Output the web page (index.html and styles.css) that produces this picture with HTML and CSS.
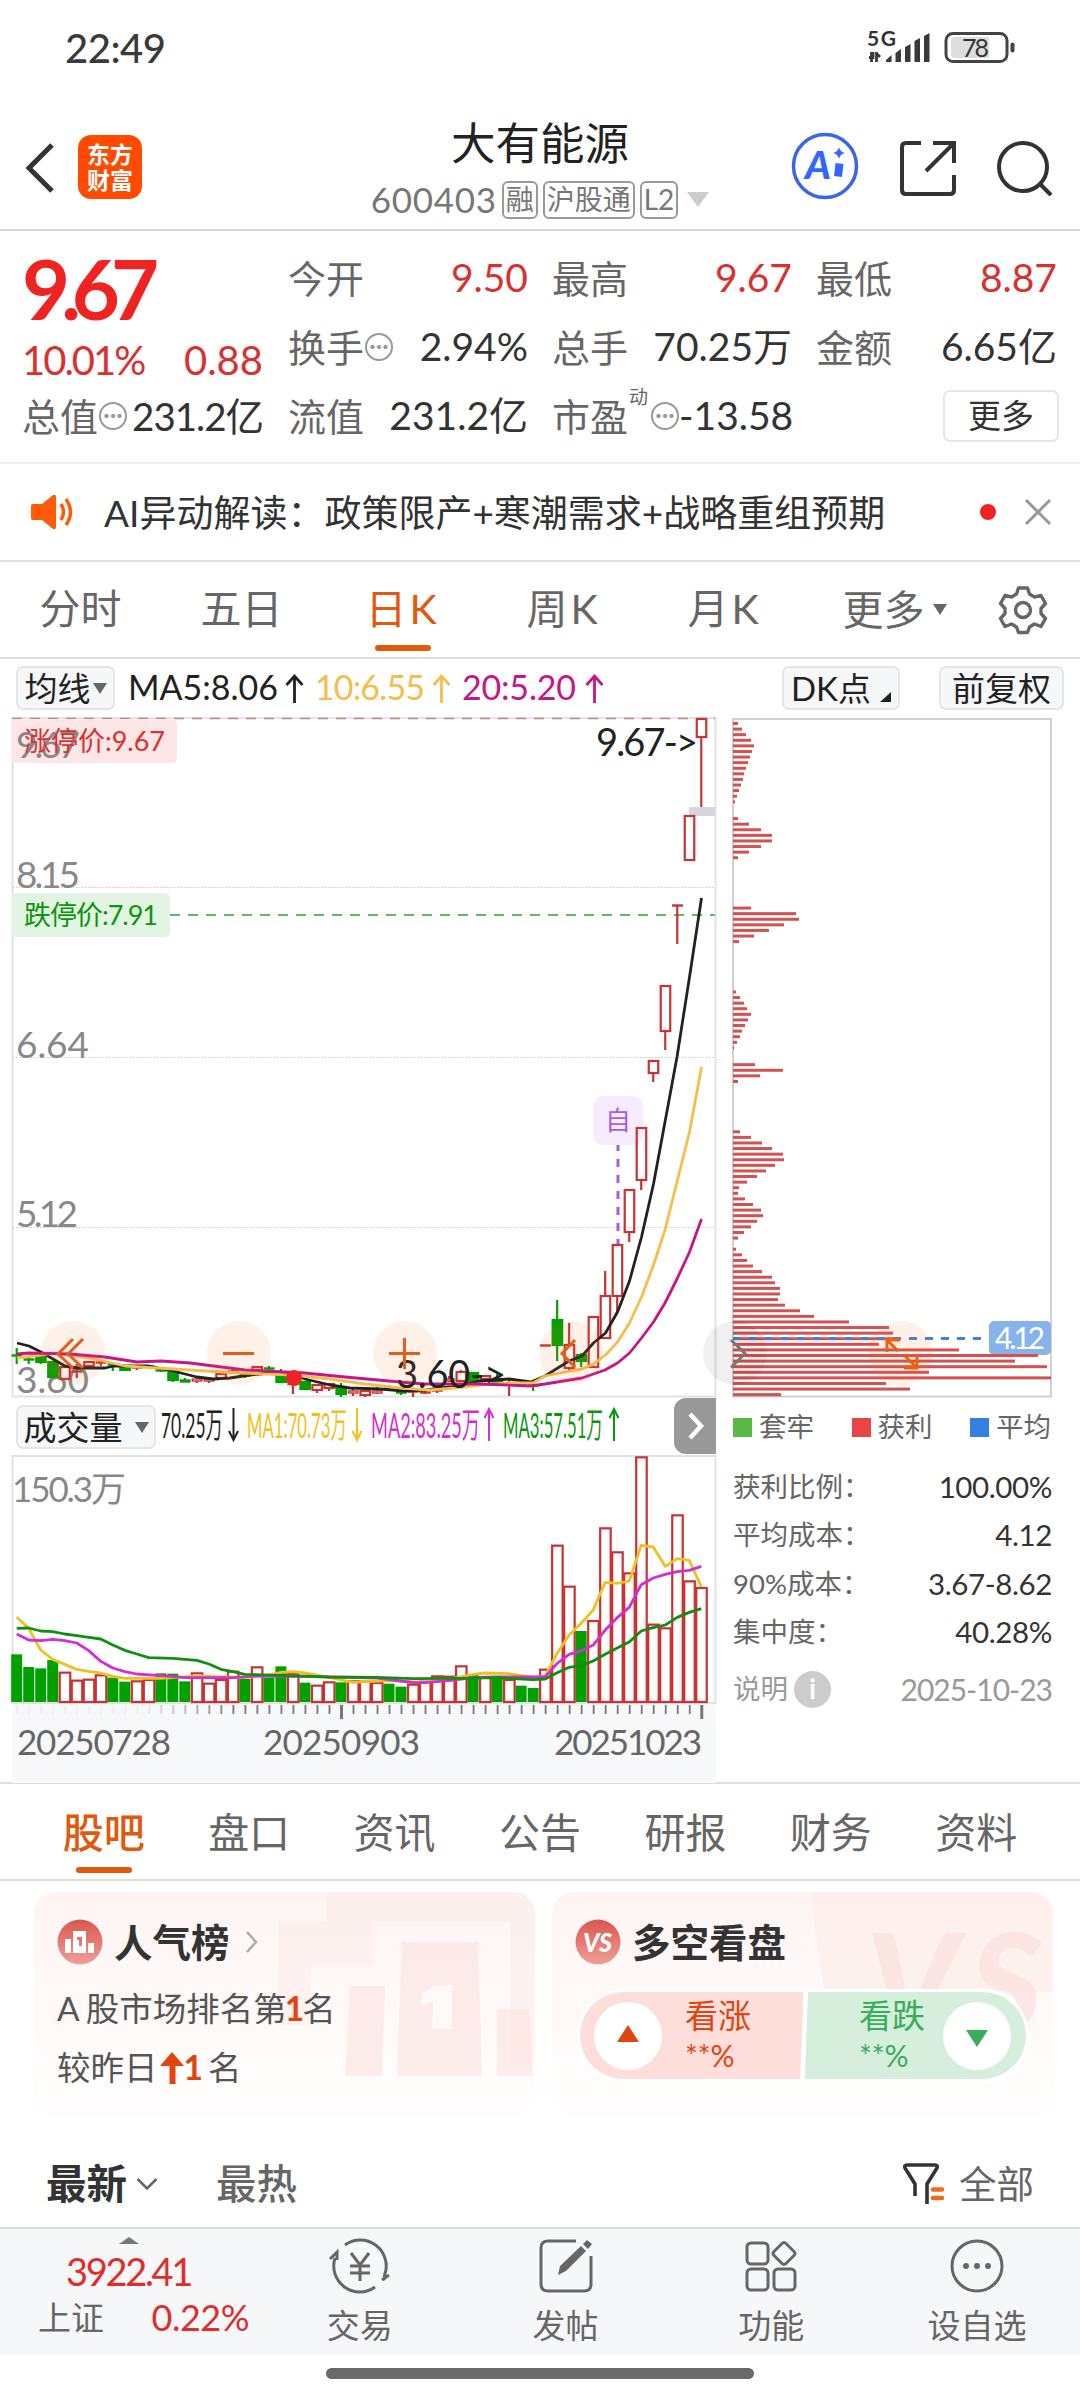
FILE: index.html
```html
<!DOCTYPE html>
<html lang="zh-CN">
<head>
    <meta charset="UTF-8">
    <meta name="viewport" content="width=device-width, initial-scale=1.0">
    <title>大有能源 600403</title>
    <link rel="stylesheet" href="styles.css">
</head>
<body>
    <div class="status-bar">
        <span class="time">22:49</span>
        <svg class="status-icons" width="150" height="44" viewBox="866 26 150 44">
            <text x="867" y="45.500" class="net" textLength="29">5G</text>
            <path d="M869 57.500h4V52M871.500 62V52M876.500 62V52M876 53l4 4" fill="none" stroke="#3a3a3a" stroke-width="2.800"/>
            <path d="M886 60l5.500-5v7H886zM895.500 53l5.500-4v13h-5.500zM905 47l5.500-3v18H905zM914.500 41l5.500-3v24h-5.500zM924 36l5.500-3v29H924z" fill="#3a3a3a"/>
            <rect x="946" y="33.500" width="61" height="28" rx="7" fill="#fff" stroke="#444" stroke-width="3"/>
            <path d="M955 37h34v21h-34q-4 0-4-4V41q0-4 4-4z" fill="#ddd"/>
            <path d="M1012.500 44.500v6" stroke="#444" stroke-width="4" stroke-linecap="round"/>
            <text x="962" y="57" class="batt" textLength="27">78</text>
        </svg>
    </div>

    <div class="header">
        <div class="header-left">
            <svg width="32" height="54" viewBox="0 0 32 54"><path d="M28 4L5 27l23 23" fill="none" stroke="#333" stroke-width="5"/></svg>
            <div class="logo"><span>东方</span><span>财富</span></div>
        </div>
        <div class="header-title">
            <h1>大有能源</h1>
            <div class="code">
                <span class="num">600403</span>
                <span class="tag">融</span>
                <span class="tag">沪股通</span>
                <span class="tag">L2</span>
                <i class="down"></i>
            </div>
        </div>
        <div class="header-right">
            <svg width="68" height="68" viewBox="0 0 68 68">
                <circle cx="34" cy="34" r="31.500" fill="none" stroke="#3a66e6" stroke-width="3.500"/>
                <text x="14" y="47" class="ai" textLength="26" lengthAdjust="spacingAndGlyphs">A</text>
                <path d="M48.500 31.500L47 44.500" stroke="#3366ff" stroke-width="8"/>
                <path d="M48 15q1 5 6 6-5 1-6 6-1-5-6-6 5-1 6-6z" fill="#3366ff"/>
            </svg>
            <svg width="56" height="56" viewBox="0 0 56 56"><path d="M21 3H6q-4 0-4 4v43q0 4 4 4h44q4 0 4-4V35M33 3h21v20M53 4L26 31" fill="none" stroke="#333" stroke-width="4"/></svg>
            <svg width="56" height="58" viewBox="0 0 56 58"><circle cx="26" cy="27" r="24" fill="none" stroke="#333" stroke-width="4"/><path d="M42 43l12 12" stroke="#333" stroke-width="4"/></svg>
        </div>
    </div>

    <div class="quote">
        <div class="main-price">
            <div class="price">9.67</div>
            <div class="change"><span class="percent">10.01%</span><span>0.88</span></div>
            <div class="cell"><label>总值</label><i class="dots"></i><b>231.2亿</b></div>
        </div>
        <div class="quote-col col-2">
            <div class="cell"><label>今开</label><b class="red">9.50</b></div>
            <div class="cell"><label>换手</label><i class="dots"></i><b>2.94%</b></div>
            <div class="cell"><label>流值</label><b>231.2亿</b></div>
        </div>
        <div class="quote-col col-3">
            <div class="cell"><label>最高</label><b class="red">9.67</b></div>
            <div class="cell"><label>总手</label><b>70.25万</b></div>
            <div class="cell"><label>市盈</label><sup>动</sup><i class="dots"></i><b>-13.58</b></div>
        </div>
        <div class="quote-col col-4">
            <div class="cell"><label>最低</label><b class="red">8.87</b></div>
            <div class="cell"><label>金额</label><b>6.65亿</b></div>
            <div class="cell end"><button class="more">更多</button></div>
        </div>
    </div>

    <div class="notice">
        <svg width="44" height="38" viewBox="0 0 44 38">
            <path d="M2 11h9L22 2q3-1 3 2v30q0 3-3 2l-11-9H2q-2 0-2-2V13q0-2 2-2z" fill="#ff5a0a"/>
            <path d="M30 11q5 8 0 16M35 6q9 13 0 26" fill="none" stroke="#ff5a0a" stroke-width="3.500"/>
        </svg>
        <span class="notice-text">AI异动解读：政策限产+寒潮需求+战略重组预期</span>
        <i class="dot"></i>
        <svg class="close" width="28" height="28" viewBox="0 0 28 28"><path d="M2 2l24 24M26 2L2 26" stroke="#999" stroke-width="3"/></svg>
    </div>

    <div class="period-tabs">
        <span>分时</span>
        <span>五日</span>
        <span class="active k">日K</span>
        <span class="k">周K</span>
        <span class="k">月K</span>
        <span class="wide">更多<i class="tri"></i></span>
        <svg width="50" height="50" viewBox="-25 -25 50 50">
            <path d="M-4.500-22h9l2 6 5 3 6.500-1.500 4.500 8-4.500 5v5l4.500 5-4.500 8L11.500 14l-5 3-2 5.500h-9l-2-5.500-5-3-6.500 2.500-4.500-8 4.500-5v-5l-4.500-5 4.500-8 6.500 1.500 5-3z" fill="none" stroke="#666" stroke-width="3.400" stroke-linejoin="round"/>
            <circle r="7.500" fill="none" stroke="#666" stroke-width="3.400"/>
        </svg>
    </div>

    <div class="ma-bar">
        <button class="pill ma-pill">均线<i class="tri"></i></button>
        <svg width="484" height="44" viewBox="126 667 484 44">
            <g class="ma-text">
                <text x="128" y="701" textLength="150" fill="#222">MA5:8.06</text>
                <text x="315" y="701" textLength="110" fill="#f5bd4b">10:6.55</text>
                <text x="462" y="701" textLength="114" fill="#c71585">20:5.20</text>
            </g>
            <g fill="none" stroke-width="2.800">
                <path d="M294.500 704v-27M286.500 686l8-9 8 9" stroke="#222"/>
                <path d="M441.500 704v-27M433.500 686l8-9 8 9" stroke="#f5bd4b"/>
                <path d="M594.500 704v-27M586.500 686l8-9 8 9" stroke="#c71585"/>
            </g>
        </svg>
        <button class="pill dk-pill">DK点<i class="corner"></i></button>
        <button class="pill fq-pill">前复权</button>
    </div>

    <div class="charts">
        <div class="chart-left">
            <svg id="kline" width="720" height="688" viewBox="0 710 720 688"></svg>
            <div class="vol-bar">
                <button class="pill vol-pill">成交量<i class="tri"></i></button>
                <svg width="514" height="54" viewBox="160 1400 514 54">
                    <g class="vol-text">
                        <text x="161" y="1440" textLength="62" lengthAdjust="spacingAndGlyphs" fill="#222">70.25万</text>
                        <text x="247" y="1440" textLength="100" lengthAdjust="spacingAndGlyphs" fill="#f0c020">MA1:70.73万</text>
                        <text x="371" y="1440" textLength="109" lengthAdjust="spacingAndGlyphs" fill="#d22fd2">MA2:83.25万</text>
                        <text x="503" y="1440" textLength="100" lengthAdjust="spacingAndGlyphs" fill="#0a960a">MA3:57.51万</text>
                    </g>
                    <g fill="none" stroke-width="2">
                        <path d="M233.500 1410v32M229 1433l4.500 9 4.500-9" stroke="#222"/>
                        <path d="M357 1410v32M352.500 1433l4.500 9 4.500-9" stroke="#f0c020"/>
                        <path d="M489 1443v-32M484.500 1420l4.500-9 4.500 9" stroke="#d22fd2"/>
                        <path d="M614 1443v-32M609.500 1420l4.500-9 4.500 9" stroke="#0a960a"/>
                    </g>
                </svg>
                <button class="next"><svg width="20" height="28" viewBox="0 0 20 28"><path d="M4 2l11 12L4 26" fill="none" stroke="#fff" stroke-width="4.500"/></svg></button>
            </div>
            <svg id="volume" width="720" height="329" viewBox="0 1454 720 329"></svg>
        </div>
        <div class="chart-right">
            <svg id="chips" width="360" height="688" viewBox="720 710 360 688"></svg>
            <div class="legend">
                <span><i class="sq green"></i>套牢</span>
                <span><i class="sq red"></i>获利</span>
                <span><i class="sq blue"></i>平均</span>
            </div>
            <div class="stat"><span>获利比例：</span><b>100.00%</b></div>
            <div class="stat"><span>平均成本：</span><b>4.12</b></div>
            <div class="stat"><span>90%成本：</span><b>3.67-8.62</b></div>
            <div class="stat"><span>集中度：</span><b>40.28%</b></div>
            <div class="stat-date"><span>说明<i class="info">i</i></span><b>2025-10-23</b></div>
        </div>

        <!-- 图表操作按钮 -->
        <svg class="tools" width="1080" height="70" viewBox="0 1318 1080 70">
            <g fill="#ff6a1a" fill-opacity="0.1">
                <circle cx="73" cy="1353" r="32"/>
                <circle cx="239" cy="1353" r="32"/>
                <circle cx="405" cy="1353" r="32"/>
                <circle cx="571" cy="1353" r="32"/>
                <circle cx="901" cy="1353" r="32"/>
            </g>
            <circle cx="735" cy="1353" r="32" fill="#000" fill-opacity="0.06"/>
            <g fill="none" stroke="#e0601a" stroke-width="3">
                <path d="M73 1339l-15 15 15 14M83 1339l-15 15 15 14"/>
                <path d="M223 1353.500h31M389 1353.500h31M404.500 1338v31"/>
                <path d="M575 1340l-13 13.500 13 14"/>
                <path d="M887 1352v-12h13M887 1340l11 11M905 1356l12 12M904 1368h13v-12" stroke="#f0600a"/>
            </g>
            <path d="M731 1340l14 13.500-14 14" fill="none" stroke="#777" stroke-width="3"/>
        </svg>
    </div>

    <div class="info-tabs">
        <span class="active">股吧</span>
        <span>盘口</span>
        <span>资讯</span>
        <span>公告</span>
        <span>研报</span>
        <span>财务</span>
        <span>资料</span>
    </div>

    <div class="cards">
        <div class="card">
            <svg class="deco" width="501" height="225" viewBox="34 1892 501 225">
                <g fill="#fbe9e6" fill-opacity="0.4">
                    <path d="M326 1892h209v170h-25V1922H373v44h-62v60h-33v-105h48z"/>
                </g>
                <g fill="#fae3e0" fill-opacity="0.65">
                    <path d="M350 1986h35l-3 90h-37zM497 2009h32l4 67h-36z"/>
                    <path fill-rule="evenodd" d="M402 1942h76l4 134h-85zM436 1985l-14 8-1 13 12-4-1 27h20v-44z"/>
                </g>
            </svg>
            <div class="card-head">
                <svg width="46" height="46" viewBox="0 0 46 46">
                    <circle cx="23" cy="23" r="22.500" fill="url(#badge)"/>
                    <path d="M8 20h6v14H8zM31 24h6v10h-6z" fill="#fff"/>
                    <path fill-rule="evenodd" d="M16 12h13v22H16zM20 18v3h2v6h3V18z" fill="#fff"/>
                    <defs><linearGradient id="badge" x2="0" y2="1"><stop stop-color="#db5650"/><stop offset="1" stop-color="#ef9e98"/></linearGradient></defs>
                </svg>
                <h2>人气榜</h2>
                <svg width="14" height="22" viewBox="0 0 14 22"><path d="M2 1l9 10-9 10" fill="none" stroke="#aaa" stroke-width="2.500"/></svg>
            </div>
            <p class="rank">A<span class="sp"></span>股市场排名第<em>1</em>名</p>
            <p class="rank second">较昨日<svg width="24" height="32" viewBox="0 0 24 32"><path d="M12 0l12 14h-8.500v18h-6V14H0z" fill="#e2440f"/></svg><em>1</em><span class="sp"></span>名</p>
        </div>
        <div class="card">
            <svg class="deco" width="502" height="225" viewBox="552 1892 502 225">
                <path d="M810 1892h224q20 0 20 20v80H824z" fill="#fbe9e6" fill-opacity="0.5"/>
                <text x="866" y="2034" class="deco-vs" textLength="176">VS</text>
            </svg>
            <div class="card-head">
                <svg width="46" height="46" viewBox="0 0 46 46">
                    <circle cx="23" cy="23" r="22.500" fill="url(#badge)"/>
                    <text x="8" y="33" class="vs" textLength="29" lengthAdjust="spacingAndGlyphs">VS</text>
                </svg>
                <h2>多空看盘</h2>
            </div>
            <div class="vote">
                <div class="vote-up">
                    <span class="knob"><i></i></span>
                    <div><strong>看涨</strong><small>**%</small></div>
                </div>
                <div class="vote-down">
                    <div><strong>看跌</strong><small>**%</small></div>
                    <span class="knob"><i></i></span>
                </div>
            </div>
        </div>
    </div>

    <div class="sort-bar">
        <strong>最新</strong>
        <svg width="22" height="14" viewBox="0 0 22 14"><path d="M1.500 2L11 11.500 20.500 2" fill="none" stroke="#666" stroke-width="2.500"/></svg>
        <span class="hot">最热</span>
        <svg class="filter" width="42" height="44" viewBox="0 0 42 44">
            <path d="M12 34V22L2 6q-1-3 2-3h28q3 0 2 3L24 22v20" fill="none" stroke="#333" stroke-width="3.600"/>
            <path d="M30 27.500h9M30 36h9" stroke="#f0681a" stroke-width="4.500" stroke-linecap="round"/>
        </svg>
        <span class="all">全部</span>
    </div>

    <div class="bottom-nav">
        <div class="index">
            <i class="up"></i>
            <div class="index-value">3922.41</div>
            <div class="index-row"><span>上证</span><b>0.22%</b></div>
        </div>
        <div class="nav-item">
            <svg width="62" height="58" viewBox="-31 -29 62 58">
                <g fill="none" stroke="#666" stroke-width="3">
                    <path d="M-15-21A26 26 0 0 1 25 8M22 14l7-5M24 14l1-7M15 21A26 26 0 0 1-25-8M-30-7l7-7v8"/>
                    <path d="M-9-13L0-1l9-12M-10 0h20M-10 7h20M0-1v16"/>
                </g>
            </svg>
            <span>交易</span>
        </div>
        <div class="nav-item">
            <svg width="56" height="58" viewBox="-28 -29 56 58">
                <path d="M10-25h-28q-7 0-7 7v36q0 7 7 7h36q7 0 7-7v-28" fill="none" stroke="#666" stroke-width="3"/>
                <path d="M-8 9l2-9 21-20 5 5-20 20zM17-22l4-4 5 4-4 5z" fill="#666"/>
            </svg>
            <span>发帖</span>
        </div>
        <div class="nav-item">
            <svg width="54" height="58" viewBox="-27 -29 54 58">
                <g fill="none" stroke="#666" stroke-width="3">
                    <rect x="-24" y="-23" width="21" height="21" rx="4"/>
                    <rect x="-24" y="3" width="21" height="21" rx="4"/>
                    <rect x="3" y="3" width="21" height="21" rx="4"/>
                    <path d="M11-22.500q2-2 4 0l8 8q2 2 0 4l-8 8q-2 2-4 0l-8-8q-2-2 0-4z"/>
                </g>
            </svg>
            <span>功能</span>
        </div>
        <div class="nav-item">
            <svg width="56" height="58" viewBox="-28 -29 56 58">
                <circle r="25" fill="none" stroke="#666" stroke-width="3"/>
                <g fill="#666"><circle cx="-11" r="3"/><circle r="3"/><circle cx="11" r="3"/></g>
            </svg>
            <span>设自选</span>
        </div>
    </div>
    <div class="home-bar"></div>

    <script src="script.js"></script>
</body>
</html>
```

FILE: styles.css
```css
* {
    margin: 0;
    padding: 0;
    box-sizing: border-box;
}

body {
    width: 1080px;
    height: 2400px;
    overflow: hidden;
    background-color: #fff;
    color: #333;
    font-family: Lato, "Noto Sans CJK SC", sans-serif;
    line-height: 1;
}

svg {
    display: block;
    flex-shrink: 0;
}

button {
    font-family: inherit;
    line-height: 1;
}

b, i, em, small {
    font-weight: normal;
    font-style: normal;
}

/* 状态栏 */
.status-bar {
    height: 94px;
    padding: 26px 64px 0 65px;
    display: flex;
    justify-content: space-between;
    align-items: flex-start;
}

.time {
    font-size: 40px;
    line-height: 44px;
    font-weight: 500;
    letter-spacing: -0.5px;
    color: #3a3a3a;
}

.net {
    font-size: 21px;
    font-weight: bold;
    fill: #333;
}

.batt {
    font-size: 25px;
    fill: #333;
}

/* 顶部标题 */
.header {
    height: 137px;
    display: flex;
    border-bottom: 2px solid #d8d8d8;
}

.header-left {
    width: 360px;
    padding: 41px 0 0 24px;
    display: flex;
    align-items: flex-start;
    gap: 22px;
}

.header-left svg {
    margin-top: 6px;
}

.logo {
    width: 64px;
    height: 64px;
    border-radius: 13px;
    background-color: #ff4a00;
    color: #fff;
    font-size: 23px;
    font-weight: bold;
    display: flex;
    flex-direction: column;
    align-items: center;
    justify-content: center;
    gap: 3px;
}

.header-title {
    width: 360px;
    padding-top: 27px;
    display: flex;
    flex-direction: column;
    align-items: center;
}

h1 {
    font-size: 44.500px;
    font-weight: normal;
    color: #222;
}

.code {
    margin-top: 15px;
    height: 38px;
    display: flex;
    align-items: center;
    gap: 5px;
    color: #777;
}

.num {
    font-size: 35px;
    letter-spacing: 0.700px;
}

.tag {
    height: 38px;
    padding: 0 2px;
    border: 2px solid #999;
    border-radius: 6px;
    font-size: 28px;
    line-height: 33px;
}

.down {
    margin-left: 4px;
    border: 11px solid transparent;
    border-top: 15px solid #ccc;
    border-bottom: 0;
}

.header-right {
    width: 360px;
    padding: 38px 27px 0 71px;
    display: flex;
    justify-content: space-between;
}

.header-right svg + svg {
    margin-top: 8px;
}

.ai {
    font-family: Lato, sans-serif;
    font-size: 37px;
    font-weight: 900;
    font-style: italic;
    fill: #3366ff;
}

/* 行情 */
.quote {
    height: 233px;
    display: flex;
    padding: 12px 23px 0 22px;
    border-bottom: 2px solid #eee;
}

.main-price {
    width: 241px;
    margin-right: 25px;
}

.price {
    height: 86px;
    font-size: 83px;
    line-height: 90px;
    font-weight: bold;
    letter-spacing: -9px;
    color: #f02323;
}

.change {
    height: 54px;
    padding-top: 10px;
    display: flex;
    justify-content: space-between;
    font-size: 40px;
    line-height: 42px;
    color: #d93030;
}

.percent {
    letter-spacing: -2px;
}

.cell {
    height: 69px;
    display: flex;
    align-items: center;
}

.main-price .cell {
    height: 66px;
}

.cell label {
    font-size: 38px;
    color: #666;
    white-space: nowrap;
}

.cell b {
    margin-left: auto;
    font-size: 39px;
    color: #333;
    white-space: nowrap;
}

.main-price .cell b {
    font-size: 38.500px;
    letter-spacing: -1px;
}

.cell b.red {
    color: #d93030;
}

.cell sup {
    font-size: 19px;
    align-self: flex-start;
    margin: 6px 2px 0 1px;
    color: #666;
}

.dots {
    width: 28px;
    height: 28px;
    margin-left: 1px;
    flex-shrink: 0;
    border: 2px solid #999;
    border-radius: 50%;
    background: radial-gradient(circle, #999 1.800px, transparent 2.300px) center / 6.500px 24px repeat-x;
    background-clip: content-box;
    padding: 0 3px;
}

.col-2 {
    width: 240px;
    margin-right: 24px;
}

.col-3 {
    width: 240px;
    margin-right: 24px;
}

.col-4 {
    width: 241px;
}

.end {
    justify-content: flex-end;
}

.more {
    width: 116px;
    height: 52px;
    margin-right: -2px;
    border: 2px solid #e5e5e5;
    border-radius: 7px;
    background-color: #fff;
    font-size: 33px;
    color: #333;
}

/* 异动提示 */
.notice {
    height: 98px;
    padding: 0 28px 0 31px;
    display: flex;
    align-items: center;
    border-bottom: 2px solid #ddd;
}

.notice-text {
    margin-left: 29px;
    font-size: 37px;
    white-space: nowrap;
}

.dot {
    width: 16px;
    height: 16px;
    margin-left: auto;
    border-radius: 50%;
    background-color: #f02323;
}

.close {
    margin-left: 28px;
}

/* 周期 */
.period-tabs {
    height: 97px;
    display: flex;
    align-items: center;
    border-bottom: 2px solid #ddd;
    font-size: 41px;
    color: #666;
}

.period-tabs span {
    width: 161px;
    height: 95px;
    line-height: 94px;
    text-align: center;
}

.period-tabs .k {
    letter-spacing: 3px;
}

.period-tabs .wide {
    width: 193px;
    padding-right: 14px;
    display: flex;
    align-items: center;
    justify-content: center;
    gap: 8px;
}

.period-tabs svg {
    margin-left: 0;
}

.active {
    color: #e0590c;
    position: relative;
}

.active::after {
    content: "";
    position: absolute;
    left: 50%;
    bottom: 6px;
    width: 56px;
    height: 6px;
    margin-left: -28px;
    border-radius: 3px;
    background-color: #e0590c;
}

.tri {
    border: 7px solid transparent;
    border-top: 11px solid #666;
    border-bottom: 0;
}

/* 均线栏 */
.ma-bar {
    height: 51px;
    padding: 7px 16px 0;
    display: flex;
    align-items: flex-start;
}

.ma-bar svg {
    margin-left: 11px;
}

.pill {
    height: 44px;
    border: 2px solid #e3e5e8;
    border-radius: 7px;
    background-color: #f6f7f9;
    font-size: 33px;
    color: #222;
    display: flex;
    align-items: center;
    justify-content: center;
    white-space: nowrap;
}

.ma-pill {
    width: 99px;
    gap: 2px;
}

.dk-pill {
    width: 118px;
    margin-left: 172px;
    gap: 9px;
}

.fq-pill {
    width: 125px;
    margin-left: 39px;
}

.corner {
    margin-top: 18px;
    border-left: 11px solid transparent;
    border-bottom: 10px solid #222;
}

.ma-text {
    font-size: 34px;
}

/* 图表 */
.charts {
    position: relative;
    height: 1074px;
    display: flex;
    border-bottom: 2px solid #ddd;
}

.chart-left {
    width: 720px;
}

.chart-right {
    width: 360px;
    padding-right: 28px;
}

.tools {
    position: absolute;
    left: 0;
    top: 608px;
}

.axis {
    font-size: 37px;
    fill: #888;
}

.price-tag {
    font-size: 27px;
}

.peak {
    font-size: 38px;
    fill: #222;
}

.date {
    font-size: 35px;
    fill: #666;
}

.vol-bar {
    height: 56px;
    padding-left: 16px;
    display: flex;
    align-items: flex-start;
}

.vol-bar svg {
    margin-left: 4px;
}

.vol-pill {
    width: 140px;
    margin-top: 7px;
    gap: 12px;
}

.vol-text {
    font-size: 35px;
}

.next {
    width: 42px;
    height: 56px;
    border: 0;
    border-radius: 12px 0 0 12px;
    background-color: #999;
    display: flex;
    align-items: center;
    justify-content: center;
}

.vol-bar .next svg {
    margin-left: 2px;
}

.legend {
    height: 64px;
    padding: 0 1px 6px 13px;
    display: flex;
    align-items: center;
    justify-content: space-between;
    font-size: 27.500px;
    color: #666;
}

.legend span {
    display: flex;
    align-items: center;
    gap: 7px;
}

.sq {
    width: 19px;
    height: 19px;
}

.sq.green {
    background-color: #5ab845;
}

.sq.red {
    background-color: #e64646;
}

.sq.blue {
    background-color: #3480e2;
}

.stat, .stat-date {
    height: 48.500px;
    padding-left: 13px;
    display: flex;
    align-items: center;
    justify-content: space-between;
    font-size: 27.500px;
    color: #666;
}

.stat b {
    font-size: 29.500px;
    letter-spacing: -0.400px;
    color: #333;
}

.stat-date {
    height: 66px;
    color: #999;
}

.stat-date span {
    display: flex;
    align-items: center;
}

.stat-date b {
    font-size: 30px;
    letter-spacing: -1px;
}

.info {
    width: 37px;
    height: 37px;
    margin-left: 6px;
    border-radius: 50%;
    background-color: #ccc;
    color: #fff;
    font-size: 28px;
    font-weight: bold;
    line-height: 35px;
    text-align: center;
}

/* 资讯标签 */
.info-tabs {
    height: 97px;
    padding: 0 31px;
    display: flex;
    border-bottom: 2px solid #ddd;
    font-size: 41px;
    color: #666;
}

.info-tabs span {
    width: 145.500px;
    height: 95px;
    line-height: 97px;
    text-align: center;
}

.info-tabs .active {
    font-weight: 500;
}

/* 卡片 */
.cards {
    height: 236px;
    padding: 11px 26px 0 34px;
    display: flex;
    gap: 17px;
}

.card {
    position: relative;
    width: 501px;
    height: 225px;
    padding: 27px 23px;
    border-radius: 22px;
    overflow: hidden;
    background: linear-gradient(#fef5f3, #fffaf8 60%, #fffefe);
}

.deco {
    position: absolute;
    left: 0;
    top: 0;
}

.deco-vs {
    font-size: 140px;
    font-weight: 900;
    font-style: italic;
    fill: #fae0dd;
    fill-opacity: 0.7;
}

.vs {
    font-size: 27px;
    font-weight: 900;
    font-style: italic;
    fill: #fff;
}

.card-head {
    position: relative;
    height: 46px;
    display: flex;
    align-items: center;
}

h2 {
    margin: 0 15px 0 11px;
    font-size: 38.500px;
    color: #333;
}

.rank {
    position: relative;
    height: 34px;
    margin-top: 27px;
    display: flex;
    align-items: center;
    font-size: 33.500px;
    color: #555;
}

.rank em {
    font-weight: bold;
    color: #e2440f;
    margin: 0 -2px;
}

.rank .sp {
    width: 6px;
}

.rank svg {
    margin: 0 2px;
}

.rank.second {
    margin-top: 25px;
}

.rank.second em {
    margin: 0 -1px 0 -2px;
}

.vote {
    position: relative;
    width: 452px;
    height: 93px;
    margin: 24px 0 0 2px;
    padding: 3px;
    border-radius: 47px;
    background-color: #fff;
    display: flex;
    overflow: hidden;
}

.vote-up, .vote-down {
    width: 225px;
    height: 87px;
    padding: 0 14px;
    display: flex;
    align-items: center;
    gap: 23px;
}

.vote-up {
    border-radius: 44px 0 0 44px;
    background-color: #fddedb;
    color: #e2440f;
    clip-path: polygon(0 0, 100% 0, 98.500% 100%, 0 100%);
}

.vote-down {
    margin-left: -1px;
    padding-right: 15px;
    justify-content: flex-end;
    gap: 18px;
    border-radius: 0 44px 44px 0;
    background-color: #d6eedc;
    color: #3aad5c;
    clip-path: polygon(2.500% 0, 100% 0, 100% 100%, 1% 100%);
}

.vote strong {
    display: block;
    margin-top: -3px;
    font-size: 33px;
    font-weight: normal;
}

.vote small {
    display: block;
    margin-top: 8px;
    font-size: 30px;
}

.knob {
    width: 68px;
    height: 68px;
    border-radius: 50%;
    background-color: #fff;
    display: flex;
    align-items: center;
    justify-content: center;
}

.knob i {
    border: 11px solid transparent;
}

.vote-up .knob i {
    border-top: 0;
    border-bottom: 17px solid #e2440f;
    margin-bottom: 4px;
}

.vote-down .knob i {
    border-bottom: 0;
    border-top: 17px solid #3aad5c;
    margin-top: 6px;
}

/* 排序 */
.sort-bar {
    height: 110px;
    padding: 24px 46px 0;
    display: flex;
    align-items: center;
    font-size: 40.500px;
}

.sort-bar svg {
    margin-left: 9px;
}

.hot {
    margin-left: 58px;
    font-weight: 500;
    color: #666;
}

.sort-bar .filter {
    margin-left: auto;
}

.all {
    margin-left: 14px;
    font-size: 37.500px;
    color: #666;
}

/* 底部导航 */
.bottom-nav {
    height: 128px;
    border-top: 2px solid #d8dadd;
    background-color: #f6f7f9;
    display: flex;
    color: #666;
}

.index {
    width: 257px;
    padding: 8px 0 0;
}

.up {
    display: block;
    width: 0;
    margin-left: 119px;
    border: 10px solid transparent;
    border-top: 0;
    border-bottom: 7px solid #777;
}

.index-value {
    margin-top: 8px;
    text-align: center;
    font-size: 38px;
    letter-spacing: -2.300px;
    color: #e22b2b;
}

.index-row {
    margin-top: 9px;
    padding: 0 8px 0 38px;
    display: flex;
    align-items: center;
    justify-content: space-between;
    font-size: 33px;
}

.index-row b {
    font-size: 36px;
    letter-spacing: -0.500px;
    color: #e22b2b;
}

.nav-item {
    width: 205.700px;
    padding-top: 8px;
    display: flex;
    flex-direction: column;
    align-items: center;
    font-size: 33px;
}

.nav-item span {
    margin-top: 14px;
}

.home-bar {
    width: 428px;
    height: 11px;
    margin: 13px auto 0;
    border-radius: 6px;
    background-color: #6a6a6a;
}
```

FILE: script.js
```javascript
const RED = '#c83232';
const GREEN = '#00a000';
const x = i => 16.7 + 12.01 * i;

function points(list) {
    return list.map(p => p.join(',')).join(' ');
}

function line(list, color, width) {
    return `<polyline points="${points(list)}" fill="none" stroke="${color}" stroke-width="${width}" stroke-linejoin="round"/>`;
}

// [涨跌, 实体上, 实体下, 最高, 最低]
const candles = [
    ['g', 1355, 1356, 1348, 1364], ['g', 1359, 1360, 1357, 1364], ['g', 1356, 1362, 1356, 1364], ['g', 1362, 1377, 1362, 1377],
    ['r', 1367, 1379, 1367, 1379], ['r', 1371, 1372, 1364, 1378], ['r', 1362, 1366, 1362, 1369], ['r', 1362, 1363, 1360, 1366],
    ['g', 1364, 1365, 1363, 1371], ['g', 1367, 1370, 1366, 1371], ['r', 1367, 1368, 1366, 1370], ['r', 1366, 1367, 1365, 1368],
    ['g', 1369, 1371, 1368, 1372], ['g', 1372, 1380, 1371, 1382], ['g', 1380, 1382, 1378, 1382], ['r', 1379, 1381, 1377, 1383],
    ['r', 1379, 1381, 1378, 1383], ['r', 1374, 1378, 1374, 1380], ['r', 1371, 1373, 1370, 1374], ['g', 1374, 1376, 1373, 1378],
    ['r', 1367, 1370, 1366, 1371], ['g', 1368, 1369, 1366, 1371], ['g', 1375, 1382, 1369, 1383], ['r', 1373, 1384, 1372, 1394],
    ['g', 1382, 1389, 1381, 1390], ['r', 1385, 1390, 1384, 1393], ['r', 1384, 1388, 1383, 1391], ['g', 1387, 1394, 1383, 1397],
    ['r', 1391, 1393, 1389, 1396], ['r', 1391, 1395, 1390, 1397], ['r', 1391, 1393, 1387, 1394], ['g', 1387, 1388, 1385, 1390],
    ['g', 1391, 1393, 1389, 1395], ['r', 1391, 1392, 1388, 1397], ['r', 1392, 1393, 1389, 1394], ['r', 1390, 1391, 1387, 1393],
    ['r', 1379, 1381, 1376, 1382], ['r', 1372, 1381, 1370, 1382], ['g', 1373, 1381, 1372, 1381], ['r', 1376, 1379, 1375, 1382],
    ['g', 1379, 1382, 1374, 1384], ['r', 1384, 1385, 1380, 1396], ['g', 1384, 1385, 1380, 1387], ['g', 1385, 1386, 1383, 1391],
    ['r', 1345, 1346, 1345, 1346], ['g', 1320, 1345, 1300, 1361], ['r', 1345, 1368, 1323, 1371], ['g', 1355, 1361, 1353, 1367],
    ['r', 1317, 1367, 1317, 1367], ['r', 1296, 1338, 1271, 1339], ['r', 1245, 1296, 1245, 1312], ['r', 1190, 1232, 1190, 1242],
    ['r', 1128, 1180, 1128, 1190], ['r', 1061, 1073, 1061, 1082], ['r', 986, 1031, 986, 1050], ['r', 905, 906, 905, 944],
    ['r', 816, 860, 816, 860], ['r', 719, 737, 719, 807]
];

const ma5 = [[17, 1343], [29, 1346], [41, 1352], [53, 1359], [65, 1366], [78, 1368], [105, 1368], [114, 1366], [149, 1366], [173, 1371], [197, 1377], [213, 1379], [230, 1378], [250, 1375], [270, 1373], [293, 1374], [305, 1379], [330, 1385], [350, 1388], [380, 1389], [405, 1391], [425, 1390], [450, 1387], [480, 1381], [509, 1379], [531, 1382], [545, 1376], [569, 1361], [582, 1356], [593.5, 1343], [605.5, 1333], [617.5, 1312], [629.5, 1281], [641.5, 1237], [653.5, 1184], [665, 1122], [677, 1057], [689.5, 977], [701.5, 898]];
const ma10 = [[17, 1358], [41, 1355], [53, 1353], [90, 1358], [125, 1366], [173, 1369], [240, 1373], [293, 1375], [330, 1379], [365, 1384], [401, 1388], [430, 1390], [455, 1388], [480, 1385], [509, 1383], [533, 1383], [545, 1376], [570, 1371], [582, 1369], [593.5, 1364], [605.5, 1355], [617.5, 1342], [629.5, 1323], [641.5, 1297], [653.5, 1265], [665, 1230], [677, 1182], [689.5, 1132], [701.5, 1067]];
const ma20 = [[17, 1354], [29, 1353], [70, 1354], [105, 1357], [137, 1362], [161, 1361], [190, 1363], [245, 1370], [305, 1373], [345, 1377], [400, 1382], [425, 1384], [480, 1384], [530, 1386], [545, 1384], [582, 1378], [605, 1370], [617.5, 1363], [629.5, 1353], [641.5, 1338], [653.5, 1322], [665, 1303], [677, 1279], [689.5, 1252], [701.5, 1219]];

// K线图
let k = '';
k += '<rect x="12.500" y="718" width="703" height="678.500" fill="none" stroke="#e2e2e2" stroke-width="2"/>';
[887.5, 1057.5, 1227.5].forEach(y => {
    k += `<path d="M13 ${y}H715" stroke="#ccc" stroke-width="1" stroke-dasharray="1.500 1.500"/>`;
});
k += '<path d="M12 718.500H715" stroke="#c08a78" stroke-width="1.500" stroke-dasharray="10 8"/>';
k += '<path d="M12 719h159q6 0 6 6v32q0 6-6 6H12z" fill="#ffe6e6"/>';
k += '<path d="M12 893h152q6 0 6 6v32q0 6-6 6H12z" fill="#e3f4e3"/>';
k += '<path d="M170 915H715" stroke="#5fb95f" stroke-width="2" stroke-dasharray="10 8"/>';
k += '<rect x="689" y="807" width="26" height="9" fill="#d4d7de"/>';
[['9.67', 758, 64], ['8.15', 888, 64], ['6.64', 1058, 73], ['5.12', 1227, 62], ['3.60', 1393, 73]].forEach(a => {
    k += `<text class="axis" x="16" y="${a[1]}" textLength="${a[2]}">${a[0]}</text>`;
});
k += '<text class="price-tag" x="24" y="751" textLength="141" fill="#d93030">涨停价:9.67</text>';
k += '<text class="price-tag" x="24" y="925" textLength="134" fill="#0a960a">跌停价:7.91</text>';
k += '<rect x="593" y="1096" width="50" height="49" rx="10" fill="#f5ecff"/>';
k += '<text x="605" y="1130" font-size="26" fill="#a45fe0">自</text>';
k += '<path d="M618 1145V1246" stroke="#a45fe0" stroke-width="3" stroke-dasharray="8 8" stroke-dashoffset="2"/>';
candles.forEach((c, i) => {
    const [dir, top, bottom, high, low] = c;
    const color = dir === 'r' ? RED : GREEN;
    k += `<path d="M${x(i)} ${high}V${top}M${x(i)} ${bottom}V${low}" stroke="${color}" stroke-width="2.200"/>`;
    const fill = dir === 'r' ? 'none' : color;
    const h = Math.max(bottom - top, 1);
    k += `<rect x="${x(i) - 4.5}" y="${top}" width="9.500" height="${h}" fill="${fill}" stroke="${color}" stroke-width="${h < 3 ? 1.4 : 2.2}"/>`;
});
k += line(ma5, '#222', 2.8) + line(ma10, '#f5bd4b', 2.8) + line(ma20, '#c71585', 2.8);
k += '<circle cx="294" cy="1378" r="8" fill="#f02323"/>';
k += '<text class="peak" x="596" y="756" textLength="102">9.67-&gt;</text>';
k += '<text class="peak" x="396" y="1388" textLength="110">3.60-&gt;</text>';
document.getElementById('kline').innerHTML = k;

// 成交量
const vols = 'g643 g681 g685 g660 r695 r719 r716 r703 g713 g725 r721 r717 g700 g701 g724 r697 r728 r717 r692 g717 r679 g713 g679 r698 g728 r734 r724 g727 r721 r722 r726 g731 g740 r731 r722 r706 r707 r676 g705 r708 g715 r717 g737 g744 r686 r314 r437 g573 r540 r262 r334 r397 r49 r551 r562 r223 r421 r441'.split(' ');
const vma1 = [[0, 532], [1, 565], [2, 630], [3, 658], [4, 673], [5, 688], [6, 694], [7, 699], [8, 709], [9, 715], [12, 715], [15, 708], [17, 711], [19, 713], [21, 705], [22, 697], [23, 695], [24, 699], [26, 712], [28, 727], [31, 722], [34, 727], [36, 717], [38, 703], [39, 699], [41, 701], [43, 712], [44, 708], [45, 640], [46, 585], [47, 550], [48, 510], [49, 427], [50, 430], [51, 423], [52, 316], [53, 321], [54, 379], [55, 356], [56, 361], [57, 440]];
const vma2 = [[0, 582], [1, 600], [2, 602], [3, 598], [4, 602], [5, 609], [6, 632], [7, 664], [8, 684], [9, 695], [10, 702], [12, 707], [14, 713], [18, 713], [20, 708], [25, 710], [30, 714], [32, 723], [33, 728], [34, 728], [36, 722], [38, 713], [40, 711], [44, 711], [45, 670], [46, 643], [47, 632], [48, 615], [49, 570], [50, 533], [51, 502], [52, 434], [53, 414], [54, 403], [55, 395], [56, 391], [57, 379]];
const vma3 = [[0, 565], [1, 564], [2, 573], [3, 575], [4, 582], [5, 587], [6, 592], [7, 597], [8, 615], [9, 631], [10, 642], [11, 653], [13, 655], [15, 661], [16, 672], [17, 688], [18, 695], [19, 703], [22, 706], [26, 711], [30, 712], [33, 716], [37, 715], [40, 713], [43, 719], [44, 717], [45, 698], [46, 682], [47, 677], [48, 663], [49, 643], [50, 624], [51, 606], [52, 573], [53, 563], [54, 555], [55, 532], [56, 517], [57, 506]];
const vy = v => 1440 + v / 3;

let v = '';
v += '<rect x="12" y="1704" width="704" height="79" fill="#f7f8fa"/>';
v += '<rect x="12.500" y="1456" width="703" height="247" fill="#fff" stroke="#e2e2e2" stroke-width="2"/>';
vols.forEach((s, i) => {
    const top = vy(Number(s.slice(1)));
    if (s[0] === 'g') {
        v += `<rect x="${x(i) - 5.5}" y="${top}" width="11" height="${1702 - top}" fill="${GREEN}"/>`;
    } else {
        v += `<rect x="${x(i) - 5}" y="${top + 1}" width="10.500" height="${1701 - top}" fill="#fff" stroke="${RED}" stroke-width="2.200"/>`;
    }
    const opacity = Math.min(1, Math.max(0.08, (i - 10) / 8));
    const big = i === 27 || i === 57;
    v += `<path d="M${x(i) + 0.5} 1705V${big ? 1719 : 1714}" stroke="#777" stroke-width="${big ? 3 : 1.8}" opacity="${opacity}"/>`;
});
[[vma1, '#f0c020'], [vma2, '#d22fd2'], [vma3, '#0f8f0f']].forEach(m => {
    v += line(m[0].map(p => [x(p[0]), vy(p[1])]), m[1], 2.8);
});
v += '<text class="date" x="12" y="1502" textLength="114" fill-opacity="0.800">150.3万</text>';
v += '<text class="date" x="17" y="1755" textLength="154">20250728</text>';
v += '<text class="date" x="263" y="1755" textLength="157">20250903</text>';
v += '<text class="date" x="554" y="1755" textLength="148">20251023</text>';
document.getElementById('volume').innerHTML = v;

// 筹码分布
const chips = {
    0: [5, 9, 13, 18, 21, 19, 17, 15, 13, 11, 10, 8, 6, 4, 2],
    17: [5, 16, 28, 39, 39, 28, 16, 5],
    33: [18, 63, 66, 51, 36, 21, 6],
    48: [3, 7, 11, 14, 18, 15, 12, 9, 7, 4, 1],
    61: [22, 50, 27, 5],
    73: [7, 18, 29, 39, 50, 51, 42, 33, 24, 14, 6, 5, 12, 20, 28, 30, 24, 18, 11, 5],
    94: [3, 9, 14, 20, 29, 39, 42, 47, 47, 45, 52, 67, 81, 116, 156, 160, 167, 146, 226, 305, 282, 314, 196, 318, 153, 177, 48]
};
let c = '<rect x="733" y="719" width="318" height="677.500" fill="none" stroke="#ccc" stroke-width="1.800"/>';
c += '<rect x="989" y="1321" width="62" height="34" rx="5" fill="#86b4ea"/>';
Object.entries(chips).forEach(([start, widths]) => {
    widths.forEach((w, i) => {
        const y = 723.5 + 5.593 * (Number(start) + i);
        c += `<rect x="733" y="${y - 1.5}" width="${w}" height="3" fill="#d25252"/>`;
    });
});
c += '<path d="M733 1338.500H989" stroke="#3f82d8" stroke-width="2.800" stroke-dasharray="8 8"/>';
c += '<text x="995" y="1349" font-size="30" fill="#fff" textLength="50">4.12</text>';
document.getElementById('chips').innerHTML = c;
```
